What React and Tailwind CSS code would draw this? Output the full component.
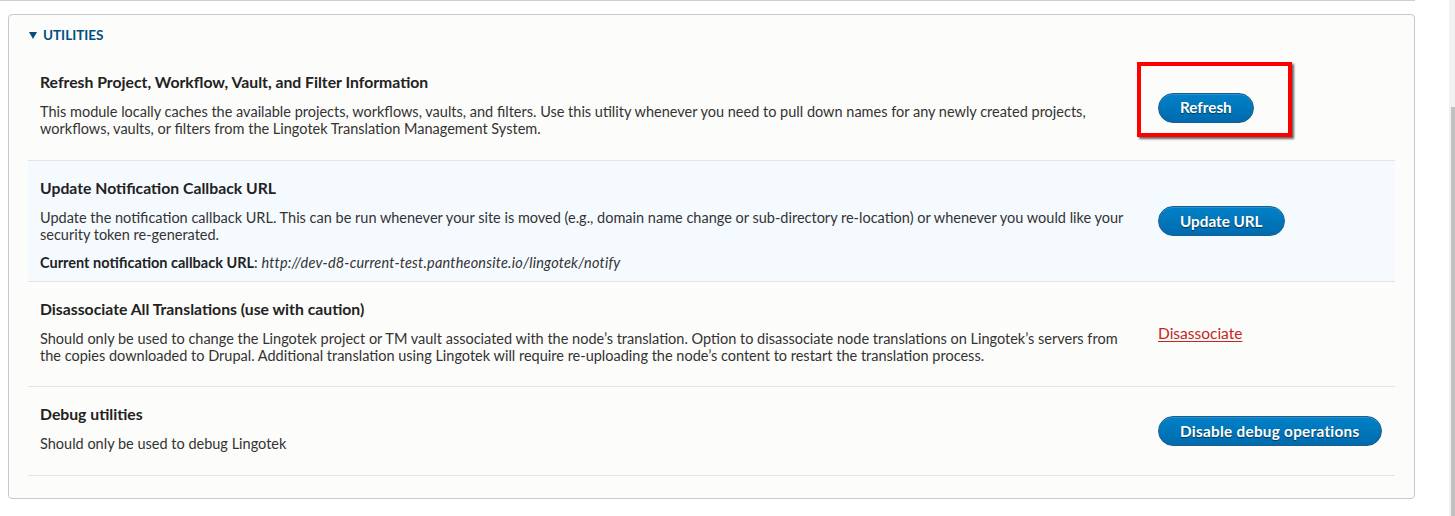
import React from "react";

const btn =
  "inline-flex items-center h-[30px] px-[21px] rounded-full border border-[#1e5c90] bg-[linear-gradient(to_bottom,#0081c8,#006bae)] text-white font-bold text-[15.25px] [text-shadow:0_1px_1px_rgba(0,0,0,0.55)] shadow-[inset_0_1px_0_rgba(255,255,255,0.15)]";

function Row({ title, children, action, blue }) {
  return (
    <div
      className={`flex border-b border-[#e6e4df] ${blue ? "bg-[#f5faff]" : ""}`}
    >
      <div className="w-[1118px] px-3 pt-[18px] pb-[10px]">
        <h3 className="text-[15.75px] leading-[18px] font-bold text-[#222] mb-[12px]">
          {title}
        </h3>
        {children}
      </div>
      <div className="flex-1 flex items-center px-3 relative">{action}</div>
    </div>
  );
}

export default function App() {
  return (
    <div
      className="relative w-[1455px] h-[516px] bg-white overflow-hidden text-[#333]"
      style={{ fontFamily: "Lato, 'Noto Sans', sans-serif" }}
    >
      <div className="w-[1415px] h-px bg-[#cfcfcf]" />
      <div className="ml-2 mt-[13px] w-[1407px] h-[485px] rounded-[4px] border border-[#c8c8c8] bg-[#fcfcfa] px-[19px]">
        <div className="flex items-center h-[40px] text-[13.5px] font-bold text-[#004f80] uppercase">
          <svg width="8" height="8" viewBox="0 0 8 8" className="mr-[6px] ml-px">
            <path d="M0 1 L8 1 L4 8 Z" fill="#004f80" />
          </svg>
          <span>Utilities</span>
        </div>
        <div className="w-[1367px]">
          <Row
            title="Refresh Project, Workflow, Vault, and Filter Information"
            action={
              <div className="relative">
                <div className="absolute left-[-21px] top-[-31px] w-[155px] h-[75px] border-[4px] border-[#ff0000] shadow-[2px_2px_2px_rgba(0,0,0,0.6)]" />
                <button className={btn}>Refresh</button>
              </div>
            }
          >
            <p className="text-[14.5px] leading-[17px] mb-[13px]">
              This module locally caches the available projects, workflows,
              vaults, and filters. Use this utility whenever you need to pull
              down names for any newly created projects, workflows, vaults, or
              filters from the Lingotek Translation Management System.
            </p>
          </Row>
          <Row
            blue
            title="Update Notification Callback URL"
            action={<button className={btn}>Update URL</button>}
          >
            <p className="text-[14.5px] leading-[17px] mb-[11px]">
              Update the notification callback URL. This can be run whenever
              your site is moved (e.g., domain name change or sub-directory
              re-location) or whenever you would like your security token
              re-generated.
            </p>
            <div className="text-[14.5px] leading-[17px]">
              <span className="font-bold text-[#222]">
                Current notification callback URL
              </span>
              : <em className="tracking-[0.2px]">http://dev-d8-current-test.pantheonsite.io/lingotek/notify</em>
            </div>
          </Row>
          <Row
            title="Disassociate All Translations (use with caution)"
            action={
              <a
                href="#"
                className="text-[15.5px] text-[#c4261c] underline underline-offset-2"
              >
                Disassociate
              </a>
            }
          >
            <p className="text-[14.5px] leading-[17px] mb-[12px]">
              Should only be used to change the Lingotek project or TM vault
              associated with the node’s translation. Option to disassociate
              node translations on Lingotek’s servers from the copies
              downloaded to Drupal. Additional translation using Lingotek will
              require re-uploading the node’s content to restart the
              translation process.
            </p>
          </Row>
          <Row
            title="Debug utilities"
            action={
              <button className={`${btn} tracking-[0.3px]`}>
                Disable debug operations
              </button>
            }
          >
            <p className="text-[14.5px] leading-[17px] mb-[13px]">
              Should only be used to debug Lingotek
            </p>
          </Row>
        </div>
      </div>
      <div className="absolute top-0 right-0 w-[6px] h-full bg-[#f1f1f1]">
        <div className="absolute left-[2px] top-[107px] w-[4px] bottom-0 bg-[#c1c1c1]" />
      </div>
    </div>
  );
}
